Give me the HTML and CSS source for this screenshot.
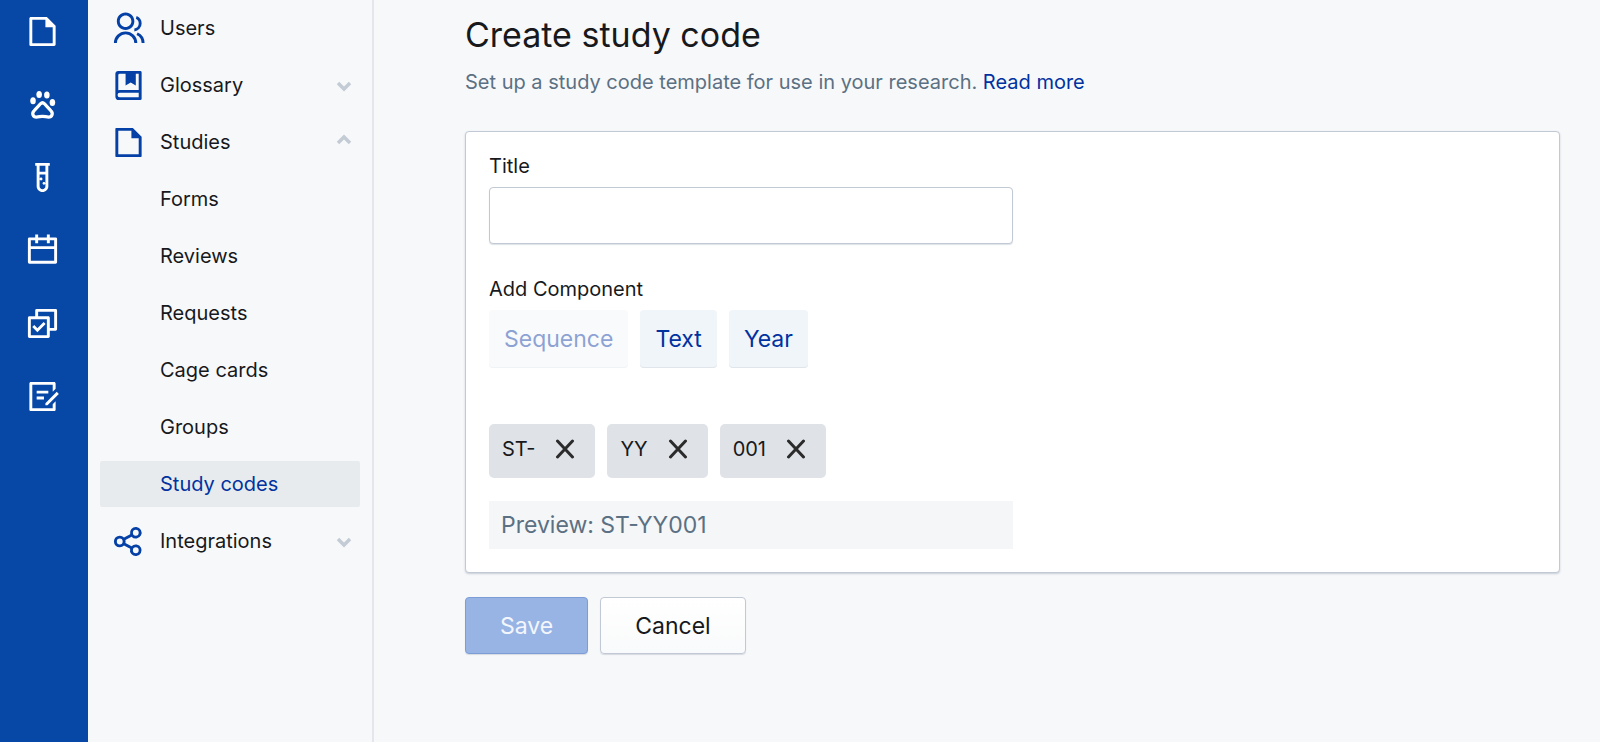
FILE: index.html
```html
<!DOCTYPE html>
<html lang="en">
<head>
  <meta charset="UTF-8">
  <title>Create study code</title>
  <meta name="viewport" content="width=device-width, initial-scale=1.0">
  <link rel="stylesheet" href="styles.css">
</head>
<body>

  <div class="app">
    <nav class="rail" aria-label="Main">
      <a href="#" aria-label="Studies">
        <svg class="icon" viewBox="0 0 24 24"><path d="M21 8v12.993A1 1 0 0 1 20.007 22H3.993A.993.993 0 0 1 3 21.008V2.992C3 2.455 3.449 2 4.002 2h10.995L21 8zm-2 1h-5V4H5v16h14V9z"/></svg>
      </a>
      <a href="#" aria-label="Animals">
        <svg class="icon" viewBox="0 0 24 24">
          <ellipse cx="5.5" cy="9.4" rx="1.9" ry="2.4"/>
          <ellipse cx="9.7" cy="5.2" rx="1.9" ry="2.4"/>
          <ellipse cx="15" cy="5.5" rx="1.9" ry="2.4"/>
          <ellipse cx="18.8" cy="10.6" rx="1.9" ry="2.4"/>
          <path class="line" d="M10.600 11.500c.8-.8 2-.8 2.800 0 1.300 1.600 2.600 2.900 4.400 4.800 1.700 1.700.8 4.300-1.700 4.300-1.500 0-2.500-.5-4.100-.5s-2.600.5-4.100.5c-2.500 0-3.400-2.600-1.700-4.300 1.800-1.900 3.100-3.200 4.400-4.800z"/>
        </svg>
      </a>
      <a href="#" aria-label="Samples">
        <svg class="icon" viewBox="0 0 24 24"><path d="M17 2v2h-1v14c0 2.210-1.790 4-4 4s-4-1.790-4-4V4H7V2h10zm-3 8h-4v8c0 1.105.895 2 2 2s2-.895 2-2v-8zm-1 5c.552 0 1 .448 1 1s-.448 1-1 1-1-.448-1-1 .448-1 1-1zm-2-3c.552 0 1 .448 1 1s-.448 1-1 1-1-.448-1-1 .448-1 1-1zm3-8h-4v4h4V4z"/></svg>
      </a>
      <a href="#" aria-label="Calendar">
        <svg class="icon" viewBox="0 0 24 24"><path d="M9 1v2h6V1h2v2h4a1 1 0 0 1 1 1v16a1 1 0 0 1-1 1H3a1 1 0 0 1-1-1V4a1 1 0 0 1 1-1h4V1h2zm11 10H4v8h16v-8zM7 5H4v4h16V5h-3v2h-2V5H9v2H7V5z"/></svg>
      </a>
      <a href="#" aria-label="Tasks">
        <svg class="icon" viewBox="0 0 24 24"><path d="M7 7V3a1 1 0 0 1 1-1h13a1 1 0 0 1 1 1v13a1 1 0 0 1-1 1h-4v3.993c0 .556-.449 1.007-1.007 1.007H3.007A1.006 1.006 0 0 1 2 20.993l.003-12.986C2.003 7.451 2.452 7 3.010 7H7zm2 0h6.993C16.549 7 17 7.449 17 8.007V15h3V4H9v3zm6 2H4.003L4 20h11V9zm-6.497 9l-3.536-3.536 1.414-1.414 2.122 2.122 4.242-4.243 1.414 1.414L8.503 18z"/></svg>
      </a>
      <a href="#" aria-label="Notes">
        <svg class="icon" viewBox="0 0 24 24"><path d="M20 2c.552 0 1 .448 1 1v3.757l-2 2V4H5v16h14v-2.758l2-2V21c0 .552-.448 1-1 1H4c-.552 0-1-.448-1-1V3c0-.552.448-1 1-1h16zm1.778 6.808l1.414 1.414L15.414 18l-1.416-.002.002-1.412 7.778-7.778zM13 12v2H8v-2h5zm3-4v2H8V8h8z"/></svg>
      </a>
    </nav>

    <nav class="sidebar" aria-label="Settings">
      <a class="item" href="#">
        <svg class="icon" viewBox="0 0 24 24"><path d="M2 22a8 8 0 1 1 16 0h-2a6 6 0 1 0-12 0H2zm8-9c-3.315 0-6-2.685-6-6s2.685-6 6-6 6 2.685 6 6-2.685 6-6 6zm0-2c2.210 0 4-1.790 4-4s-1.790-4-4-4-4 1.790-4 4 1.790 4 4 4zm8.284 3.703A8.002 8.002 0 0 1 23 22h-2a6.001 6.001 0 0 0-3.537-5.473l.82-1.824zm-.688-11.290A5.500 5.500 0 0 1 21 8.500a5.499 5.499 0 0 1-5 5.478v-2.013a3.500 3.500 0 0 0 1.041-6.609l.555-1.943z"/></svg>
        <span>Users</span>
      </a>
      <a class="item" href="#">
        <svg class="icon" viewBox="0 0 24 24"><path d="M3 19.500V4a2 2 0 0 1 2-2h15a1 1 0 0 1 1 1v18a1 1 0 0 1-1 1H5.500A2.500 2.500 0 0 1 3 19.500zM19 20v-3H6a1.500 1.500 0 0 0 0 3h13zM10 4H6a1 1 0 0 0-1 1v10.200A3 3 0 0 1 6 15h13V4h-2v8l-3.500-2-3.500 2V4z"/></svg>
        <span>Glossary</span>
        <svg class="chevron" viewBox="0 0 16 16"><path d="M2 6l6 6 6-6"/></svg>
      </a>
      <a class="item" href="#">
        <svg class="icon" viewBox="0 0 24 24"><path d="M21 8v13.500a.5.5 0 0 1-.5.5h-17a.5.5 0 0 1-.5-.5v-19a.5.5 0 0 1 .5-.5h11.500L21 8zm-2 1h-5V4H5v16h14V9z"/></svg>
        <span>Studies</span>
        <svg class="chevron" viewBox="0 0 16 16"><path d="M2 9l6-6 6 6"/></svg>
      </a>
      <a class="item sub" href="#">Forms</a>
      <a class="item sub" href="#">Reviews</a>
      <a class="item sub" href="#">Requests</a>
      <a class="item sub" href="#">Cage cards</a>
      <a class="item sub" href="#">Groups</a>
      <a class="item sub active" href="#" aria-current="page">Study codes</a>
      <a class="item" href="#">
        <svg class="icon" viewBox="0 0 24 24"><path d="M13.120 17.023l-4.199-2.290a4 4 0 1 1 0-5.465l4.200-2.290a4 4 0 1 1 .959 1.755l-4.200 2.290a4.008 4.008 0 0 1 0 1.954l4.199 2.290a4 4 0 1 1-.959 1.755zM6 14a2 2 0 1 0 0-4 2 2 0 0 0 0 4zm11-6a2 2 0 1 0 0-4 2 2 0 0 0 0 4zm0 12a2 2 0 1 0 0-4 2 2 0 0 0 0 4z"/></svg>
        <span>Integrations</span>
        <svg class="chevron" viewBox="0 0 16 16"><path d="M2 6l6 6 6-6"/></svg>
      </a>
    </nav>

    <main class="content">
      <h1>Create study code</h1>
      <p class="intro">Set up a study code template for use in your research. <a href="#">Read more</a></p>

      <form>
        <div class="card">
          <label for="title">Title</label>
          <input class="text-input" id="title" type="text">

          <div class="label" id="add-label">Add Component</div>
          <div class="row" role="group" aria-labelledby="add-label">
            <button class="btn-add" type="button" disabled>Sequence</button>
            <button class="btn-add" type="button">Text</button>
            <button class="btn-add" type="button">Year</button>
          </div>

          <div class="row chips">
            <div class="chip">
              <span>ST-</span>
              <button type="button" aria-label="Remove ST-"><svg viewBox="0 0 20 20"><path d="M2.500 2l15 16M17.500 2l-15 16"/></svg></button>
            </div>
            <div class="chip">
              <span>YY</span>
              <button type="button" aria-label="Remove YY"><svg viewBox="0 0 20 20"><path d="M2.500 2l15 16M17.500 2l-15 16"/></svg></button>
            </div>
            <div class="chip">
              <span>001</span>
              <button type="button" aria-label="Remove 001"><svg viewBox="0 0 20 20"><path d="M2.500 2l15 16M17.500 2l-15 16"/></svg></button>
            </div>
          </div>

          <div class="preview">Preview: ST-YY001</div>
        </div>

        <div class="row">
          <button class="btn btn-save" type="submit" disabled>Save</button>
          <button class="btn" type="button">Cancel</button>
        </div>
      </form>
    </main>
  </div>

</body>
</html>
```
FILE: styles.css
```css
:root {
  --brand: #0747a6;
  --link: #0032a0;
  --bg: #f7f8fa;
  --border: #c1c9d4;
  --muted: #5b7083;
}

* {
  box-sizing: border-box;
}

body {
  margin: 0;
  font-family: Inter, "Liberation Sans", sans-serif;
  font-size: 20px;
  line-height: 24px;
  color: #17191c;
  background: var(--bg);
}

a {
  color: var(--link);
  text-decoration: none;
}

button {
  font: inherit;
  cursor: pointer;
}

button:disabled {
  cursor: default;
}

.app {
  display: flex;
  min-height: 100vh;
}

.icon {
  display: block;
  width: 35px;
  height: 35px;
  fill: currentColor;
}

.icon .line {
  fill: none;
  stroke: currentColor;
  stroke-width: 2.2;
}

/* left icon rail */
.rail {
  flex: none;
  width: 88px;
  padding-top: 14px;
  background: var(--brand);
  display: flex;
  flex-direction: column;
  align-items: center;
  gap: 38px;
}

.rail a {
  color: white;
  margin-right: 3px;
}

/* settings menu */
.sidebar {
  flex: none;
  width: 286px;
  padding: 5px 12px 0;
  border-right: 2px solid #e3e6ea;
  display: flex;
  flex-direction: column;
  gap: 11px;
}

.item {
  height: 46px;
  padding: 0 8px 0 11px;
  display: flex;
  align-items: center;
  gap: 14px;
  color: #17191c;
  border-radius: 2px;
}

.item .icon {
  color: #0540a6;
}

.item.sub {
  padding-left: 60px;
}

.item.active {
  background: #e8ebee;
  color: var(--link);
}

.chevron {
  width: 16px;
  height: 16px;
  margin-left: auto;
  fill: none;
  stroke: #c3cbd4;
  stroke-width: 3.4;
}

/* page */
.content {
  flex: 1;
  padding: 13px 40px 0 91px;
}

h1 {
  margin: 0 0 13px;
  font-size: 34px;
  font-weight: 400;
  line-height: 44px;
}

.intro {
  margin: 0 0 37px;
  color: var(--muted);
}

.card {
  padding: 22px 23px 23px;
  margin-bottom: 24px;
  background: white;
  border: 1px solid var(--border);
  border-radius: 4px;
  box-shadow: 0 1px 2px rgba(90, 110, 130, 0.3);
}

label,
.label {
  display: block;
  margin-bottom: 9px;
}

.text-input {
  display: block;
  width: 50%;
  height: 57px;
  margin-bottom: 33px;
  padding: 0 12px;
  font: inherit;
  border: 1px solid var(--border);
  border-radius: 4px;
  box-shadow: 0 1px 1px rgba(90, 110, 130, 0.2);
}

.row {
  display: flex;
  gap: 12px;
}

.btn-add {
  height: 58px;
  padding: 0 15px;
  font-size: 23px;
  color: var(--link);
  background: #f0f5fa;
  border: none;
  border-radius: 4px;
  box-shadow: inset 0 -1px 0 #dfe5ea;
}

.btn-add:disabled {
  opacity: 0.45;
}

.chips {
  margin: 56px 0 23px;
}

.chip {
  height: 54px;
  padding: 0 16px 5px 13px;
  display: flex;
  align-items: center;
  gap: 16px;
  background: #dfe2e7;
  border-radius: 5px;
}

.chip button {
  padding: 4px;
  border: none;
  background: none;
}

.chip svg {
  display: block;
  width: 20px;
  height: 20px;
  fill: none;
  stroke: #2b2b2b;
  stroke-width: 3;
  stroke-linecap: round;
}

.preview {
  width: 50%;
  padding: 12px;
  font-size: 23px;
  color: var(--muted);
  background: #f4f6f8;
}

.btn {
  height: 57px;
  padding: 0 34px;
  font-size: 23px;
  color: #17191c;
  background: linear-gradient(white, #f9fafb);
  border: 1px solid var(--border);
  border-radius: 4px;
  box-shadow: 0 1px 1px rgba(90, 110, 130, 0.2);
}

.btn-save {
  color: #f3f6fc;
  background: #97b4e4;
  border-color: #7c9dd5;
}
```
